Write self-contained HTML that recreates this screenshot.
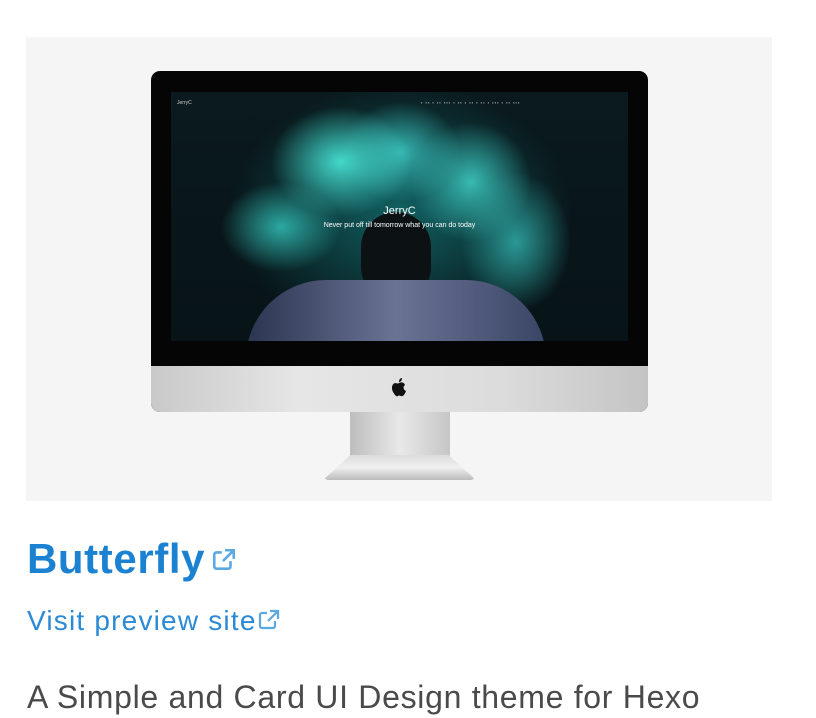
<!DOCTYPE html>
<html><head><meta charset="utf-8"><style>
body{margin:0;width:816px;height:718px;background:#fff;overflow:hidden;font-family:"Liberation Sans",sans-serif;position:relative}
.box{position:absolute;left:26px;top:37px;width:746px;height:464px;background:#f5f5f5}
.mon{position:absolute;left:151px;top:71px;width:497px;height:341px;border-radius:9px;overflow:hidden;background:#050505}
.chin{position:absolute;left:0;top:295px;width:497px;height:46px;background:linear-gradient(90deg,#c9c9c9,#e6e6e6 30%,#dcdcdc 70%,#c4c4c4)}
.scr{position:absolute;left:20px;top:21px;width:457px;height:249px;overflow:hidden;
background:radial-gradient(ellipse 70px 55px at 170px 70px,rgba(70,225,210,.95),transparent),
radial-gradient(ellipse 60px 60px at 300px 90px,rgba(60,200,190,.9),transparent),
radial-gradient(ellipse 60px 45px at 110px 135px,rgba(50,190,180,.85),transparent),
radial-gradient(ellipse 55px 70px at 345px 150px,rgba(50,180,175,.8),transparent),
radial-gradient(ellipse 60px 50px at 230px 60px,rgba(60,200,195,.85),transparent),
radial-gradient(ellipse 170px 130px at 230px 120px,rgba(20,120,120,.75),transparent),
linear-gradient(#0a1a1e,#071317)}
.body{position:absolute;left:75px;top:188px;width:300px;height:80px;border-radius:110px 110px 0 0;background:linear-gradient(90deg,#2a3550,#6b7395 50%,#3a4566)}
.face{position:absolute;left:190px;top:120px;width:70px;height:90px;border-radius:35px;background:#0c1214}
.ttl{position:absolute;left:0;width:457px;text-align:center;color:#fff}
.stand{position:absolute;left:350px;top:412px;width:100px;height:46px;background:linear-gradient(90deg,#bdbdbd,#e8e8e8 50%,#c6c6c6)}
.base{position:absolute;left:323px;top:455px;width:153px;height:25px;background:linear-gradient(#dcdcdc,#f0f0f0 50%,#bbb);clip-path:polygon(18% 0,82% 0,100% 100%,0 100%);border-radius:0 0 6px 6px}
.h{position:absolute;left:27px;top:535px;font-size:42px;font-weight:bold;color:#1b82d1;letter-spacing:0.6px}
.v{position:absolute;left:27px;top:605px;font-size:28px;color:#2b8ad5;letter-spacing:1.2px}
.d{position:absolute;left:27px;top:679px;font-size:32px;color:#4a4a4a;letter-spacing:0.7px}
svg{vertical-align:middle}
</style></head><body>
<div class="box"></div>
<div class="mon">
 <div class="scr">
  <div class="face"></div>
  <div class="body"></div>
  <div style="position:absolute;left:6px;top:8px;font-size:5px;color:#ccc">JerryC</div>
  <div style="position:absolute;left:250px;top:8px;font-size:4px;color:#ccc;letter-spacing:1px">▪ ▪▪ ▪ ▪▪ ▪▪▪ ▪ ▪▪ ▪ ▪▪ ▪ ▪▪ ▪ ▪▪▪ ▪ ▪▪ ▪▪▪</div>
  <div class="ttl" style="top:113px;font-size:11px">JerryC</div>
  <div class="ttl" style="top:130px;font-size:7px">Never put off till tomorrow what you can do today</div>
 </div>
 <div class="chin">
 <svg style="position:absolute;left:238px;top:11px" width="20" height="22" viewBox="0 0 20 22"><path d="M10 6c2-1 5-1 6 2-2 1-2 5 1 6-1 3-3 6-5 5-1 0-2-1-3 0-2 1-3-1-5-4-2-4-1-8 2-9 1 0 3 1 4 0zM10 5c0-2 1-4 3-4 0 2-1 4-3 4z" fill="#111"/></svg></div>
</div>
<div class="stand"></div>
<div class="base"></div>
<div class="h">Butterfly <svg width="26" height="26" viewBox="0 0 24 24" style="margin-left:-6px;margin-top:-4px"><path d="M10 5H5a2 2 0 0 0-2 2v11a2 2 0 0 0 2 2h11a2 2 0 0 0 2-2v-5" fill="none" stroke="#5aa9e3" stroke-width="2.4"/><path d="M13 3h8v8M21 3L11 13" fill="none" stroke="#5aa9e3" stroke-width="2.4"/></svg></div>
<div class="v">Visit preview site<svg width="24" height="24" viewBox="0 0 24 24" style="margin-left:0;margin-top:-6px"><path d="M10 5H5a2 2 0 0 0-2 2v11a2 2 0 0 0 2 2h11a2 2 0 0 0 2-2v-5" fill="none" stroke="#5aa9e3" stroke-width="2.2"/><path d="M13 3h8v8M21 3L11 13" fill="none" stroke="#5aa9e3" stroke-width="2.2"/></svg></div>
<div class="d">A Simple and Card UI Design theme for Hexo</div>
</body></html>
